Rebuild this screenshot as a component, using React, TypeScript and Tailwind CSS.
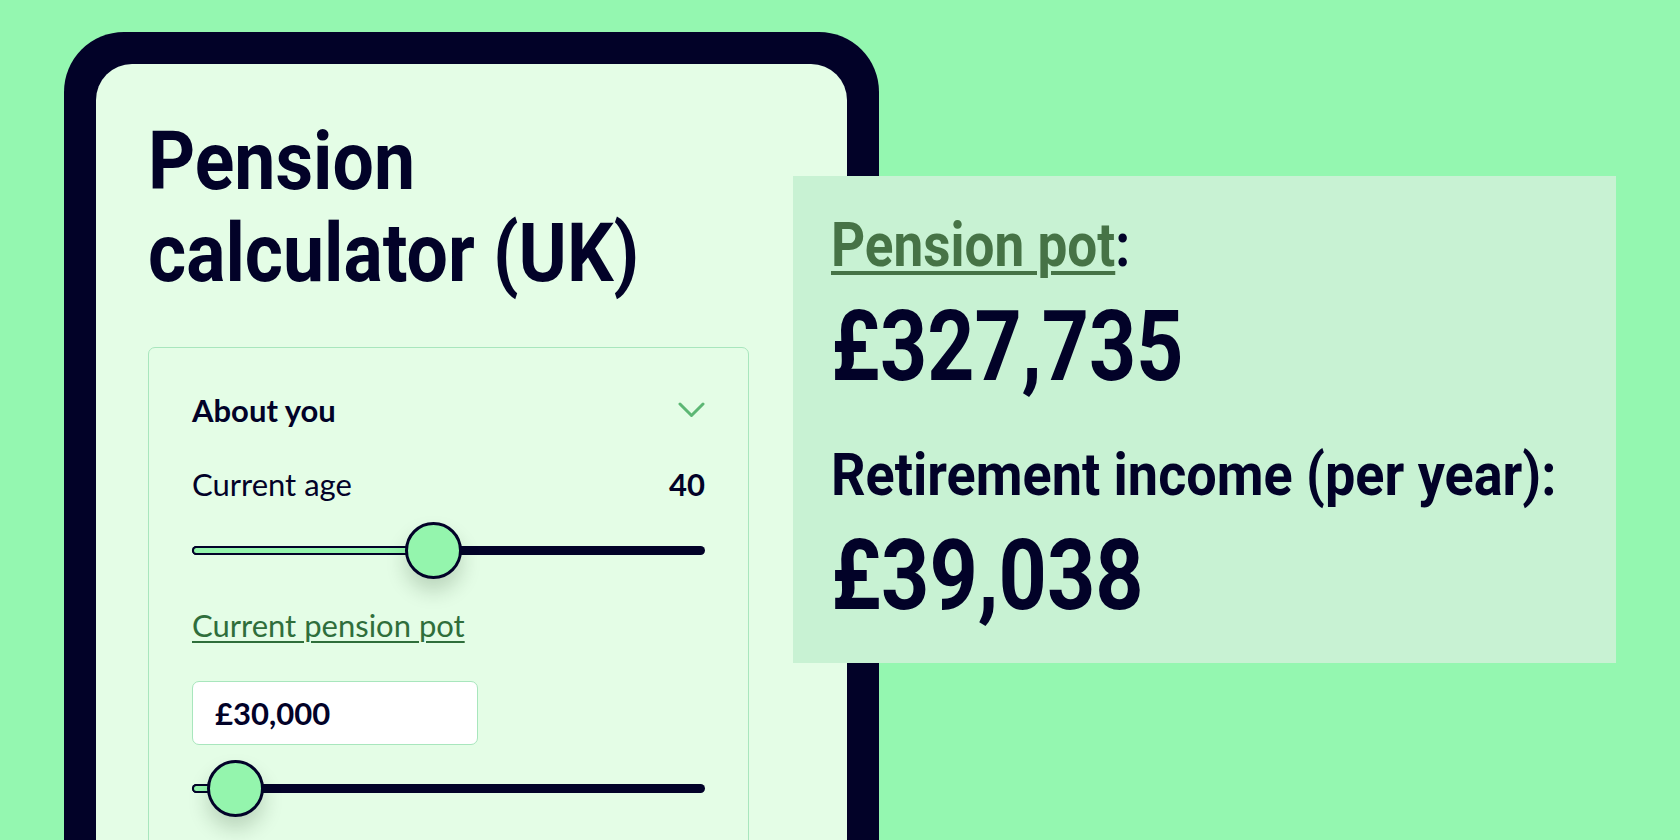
import React from "react";

type SliderProps = {
  // thumb centre, in px from the track's left edge
  pos: number;
};

const Slider: React.FC<SliderProps> = ({ pos }) => {
  return (
    <div className="relative h-[57px] w-full">
      {/* track */}
      <div className="absolute left-0 right-0 top-[24px] h-[9px] rounded-full bg-[#020228]" />
      {/* filled part */}
      <div
        className="absolute left-0 top-[24px] h-[9px] rounded-full border-2 border-[#020228] bg-[#94f5ad]"
        style={{ width: pos }}
      />
      {/* thumb */}
      <div
        className="absolute top-0 h-[57px] w-[57px] rounded-full border-[3.5px] border-[#020228] bg-[#94f5ad] shadow-[0_12px_20px_rgba(0,40,0,0.18)]"
        style={{ left: pos - 28.5 }}
      />
    </div>
  );
};

const Chevron = () => (
  <svg width="27" height="16" viewBox="0 0 27 16" fill="none">
    <polyline
      points="2,2 13.5,13.5 25,2"
      stroke="#5cb774"
      strokeWidth="3"
      strokeLinecap="round"
      strokeLinejoin="round"
    />
  </svg>
);

const display = {
  fontFamily: '"Roboto", "Liberation Sans", sans-serif',
};
const body = {
  fontFamily: '"Lato", "Open Sans", sans-serif',
};

export default function App() {
  return (
    <div className="h-[840px] w-[1680px] overflow-hidden bg-[#94f7b0]">
      <div className="flex items-start pl-[64px]">
        {/* 端末フレーム */}
        <div className="mt-[32px] h-[900px] w-[815px] shrink-0 rounded-[60px] bg-[#020228] p-[32px]">
          <div className="h-full rounded-[36px] bg-[#e4fde6] pl-[52px] pt-[52px]">
            <h1
              className="origin-left scale-x-[0.905] whitespace-nowrap text-[81px] font-bold leading-[92px] text-[#020228]"
              style={display}
            >
              Pension
              <br />
              calculator (UK)
            </h1>

            {/* About you カード */}
            <div
              className="mt-[47px] h-[600px] w-[601px] rounded-[7px] border-[1.5px] border-[#a8e6bd] px-[43px] pt-[44px]"
              style={body}
            >
              <div className="flex h-[36px] items-center justify-between">
                <span className="text-[31px] font-bold leading-[36px] text-[#020228]">
                  About you
                </span>
                <Chevron />
              </div>

              <div className="mt-[38px] flex justify-between text-[31px] leading-[36px] text-[#020228]">
                <span>Current age</span>
                <span className="font-bold">40</span>
              </div>

              <div className="mt-[20px]">
                <Slider pos={241} />
              </div>

              <div className="mt-[28px] text-[31px] leading-[36px]">
                <span className="text-[#2f6e3b] underline decoration-[1.5px] underline-offset-[4px]">
                  Current pension pot
                </span>
              </div>

              <div className="mt-[38px] flex h-[64px] w-[286px] items-center rounded-[7px] border-[1.5px] border-[#a8e6bd] bg-white pl-[22px] text-[31px] font-bold text-[#020228]">
                £30,000
              </div>

              <div className="mt-[15px]">
                <Slider pos={43} />
              </div>
            </div>
          </div>
        </div>

        {/* 結果パネル */}
        <div
          className="relative z-10 ml-[-86px] mt-[176px] h-[487px] w-[823px] shrink-0 bg-[#c8f2d3] pl-[38px] pt-[39px] text-[#020228]"
          style={display}
        >
          <div className="origin-left scale-x-[0.87] whitespace-nowrap text-[61px] font-bold leading-[61px]">
            <span className="text-[#467346] underline decoration-[4px] underline-offset-[5px]">
              Pension pot
            </span>
            :
          </div>
          <div className="mt-[22px] origin-left scale-x-[0.84] whitespace-nowrap text-[98px] font-bold leading-[98px]">
            £327,735
          </div>
          <div className="mt-[49px] origin-left scale-x-[0.915] whitespace-nowrap text-[59px] font-bold leading-[59px]">
            Retirement income (per year):
          </div>
          <div className="mt-[23px] origin-left scale-x-[0.86] whitespace-nowrap text-[98px] font-bold leading-[98px]">
            £39,038
          </div>
        </div>
      </div>
    </div>
  );
}
